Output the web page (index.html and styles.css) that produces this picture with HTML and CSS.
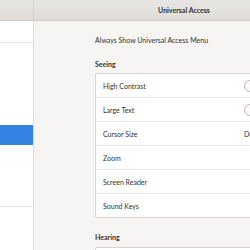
FILE: index.html
```html
<!DOCTYPE html>
<html>
<head>
<meta charset="utf-8">
<link rel="stylesheet" href="styles.css">
</head>
<body>
<div class="window">
  <div class="headerbar">
    <div class="hb-left"></div>
    <div class="hb-right"><span class="title">Universal Access</span></div>
  </div>
  <div class="main">
    <div class="sidebar">
      <div class="srow"></div>
      <div class="ssep"></div>
      <div class="srow"></div>
      <div class="srow"></div>
      <div class="srow"></div>
      <div class="srow"></div>
      <div class="srow selected"></div>
      <div class="srow"></div>
      <div class="srow"></div>
      <div class="srow"></div>
      <div class="ssep"></div>
      <div class="srow"></div>
    </div>
    <div class="content">
      <div class="always">Always Show Universal Access Menu</div>
      <div class="section-title">Seeing</div>
      <div class="list">
        <div class="row"><span>High Contrast</span><span class="switch"><span class="knob"></span></span></div>
        <div class="row"><span>Large Text</span><span class="switch"><span class="knob"></span></span></div>
        <div class="row"><span>Cursor Size</span><span class="value">Default</span></div>
        <div class="row"><span>Zoom</span></div>
        <div class="row"><span>Screen Reader</span></div>
        <div class="row"><span>Sound Keys</span></div>
      </div>
      <div class="section-title hearing">Hearing</div>
      <div class="list">
        <div class="row"></div>
      </div>
    </div>
  </div>
</div>
</body>
</html>
```
FILE: styles.css
```css
html, body {
  margin: 0;
  padding: 0;
  width: 250px;
  height: 250px;
  overflow: hidden;
  background: #f6f5f4;
}
.window {
  width: 334px;
  height: 250px;
  display: flex;
  flex-direction: column;
  font-family: Lato, "Open Sans", sans-serif;
  color: #2e3436;
  font-size: 7px;
}
.headerbar {
  height: 20px;
  display: flex;
  background: linear-gradient(to bottom, #e8e6e3, #e0ddd9);
  border-bottom: 1px solid #d2ccc6;
  flex-shrink: 0;
}
.hb-left {
  width: 33px;
  border-right: 1px solid #d4cec8;
}
.hb-right {
  flex: 1;
  display: flex;
  align-items: center;
  justify-content: center;
}
.title {
  font-weight: bold;
  font-size: 7px;
  color: #2e3436;
}
.main {
  flex: 1;
  display: flex;
}
.sidebar {
  width: 33px;
  background: #ffffff;
  border-right: 1px solid #dedad6;
  display: flex;
  flex-direction: column;
}
.srow {
  height: 20.5px;
}
.srow.selected {
  height: 20px;
  background: #3584e4;
}
.ssep {
  height: 1px;
  background: #e6e3e0;
}
.content {
  flex: 1;
  padding-left: 61px;
  display: flex;
  flex-direction: column;
}
.always {
  margin-top: 14px;
  height: 10px;
  line-height: 10px;
}
.section-title {
  font-weight: bold;
  margin-top: 14px;
  height: 10px;
  line-height: 10px;
  margin-bottom: 4px;
}
.section-title.hearing {
  margin-top: 14px;
  margin-bottom: 5px;
}
.list {
  width: 178px;
  background: #ffffff;
  border: 1px solid #d8d4d0;
  border-radius: 2px;
}
.row {
  height: 23px;
  display: flex;
  align-items: center;
  justify-content: space-between;
  padding: 0 5px 0 7px;
  border-top: 1px solid #ebe9e6;
}
.row:first-child {
  border-top: none;
}
.value {
  color: #2e3436;
  width: 25px;
  white-space: nowrap;
}
.switch {
  width: 25px;
  height: 12px;
  box-sizing: border-box;
  border: 1px solid #d6d1cc;
  border-radius: 7px;
  background: #ebe8e5;
  position: relative;
}
.knob {
  position: absolute;
  left: -1px;
  top: -1px;
  width: 12px;
  height: 12px;
  box-sizing: border-box;
  border-radius: 50%;
  background: #fbfafa;
  border: 1px solid #c8c2bc;
}
```
